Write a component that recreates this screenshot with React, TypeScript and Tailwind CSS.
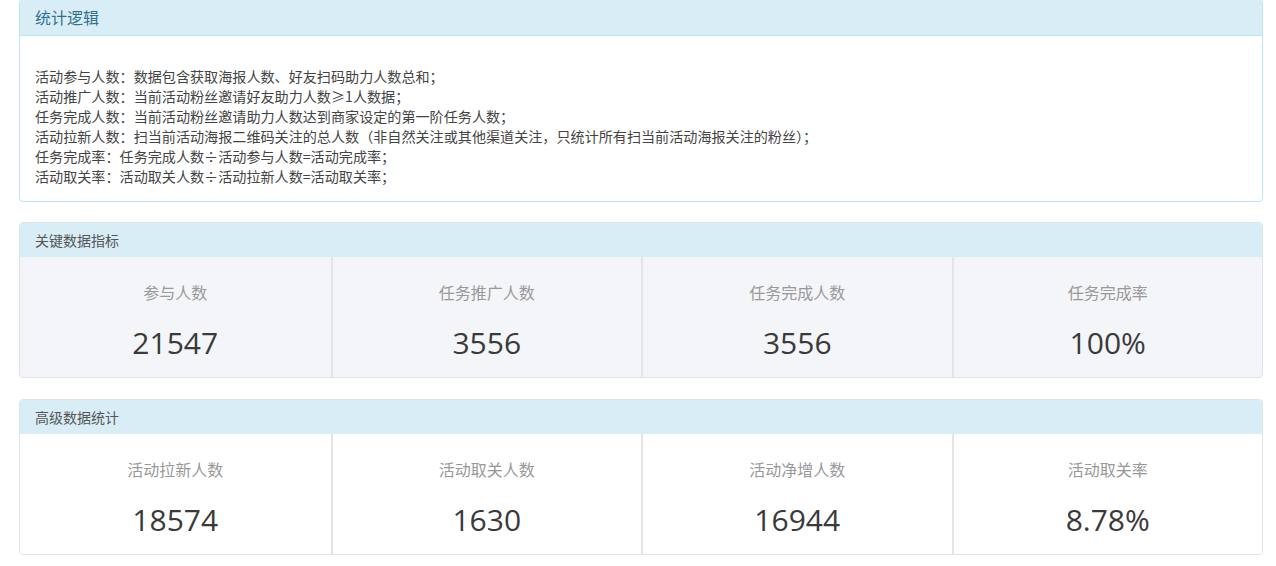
const logicLines = [
  "活动参与人数：数据包含获取海报人数、好友扫码助力人数总和；",
  "活动推广人数：当前活动粉丝邀请好友助力人数≥1人数据；",
  "任务完成人数：当前活动粉丝邀请助力人数达到商家设定的第一阶任务人数；",
  "活动拉新人数：扫当前活动海报二维码关注的总人数（非自然关注或其他渠道关注，只统计所有扫当前活动海报关注的粉丝）；",
  "任务完成率：任务完成人数÷活动参与人数=活动完成率；",
  "活动取关率：活动取关人数÷活动拉新人数=活动取关率；",
];

const keyStats = [
  { label: "参与人数", value: "21547" },
  { label: "任务推广人数", value: "3556" },
  { label: "任务完成人数", value: "3556" },
  { label: "任务完成率", value: "100%" },
];

const advStats = [
  { label: "活动拉新人数", value: "18574" },
  { label: "活动取关人数", value: "1630" },
  { label: "活动净增人数", value: "16944" },
  { label: "活动取关率", value: "8.78%" },
];

function StatPanel({
  title,
  stats,
  gray,
}: {
  title: string;
  stats: { label: string; value: string }[];
  gray?: boolean;
}) {
  return (
    <div className="rounded-[4px] border border-[#dfe3e6] overflow-hidden">
      <div className="h-[34px] bg-[#d9edf7] px-[15px] flex items-center text-[14px] text-[#555]">
        {title}
      </div>
      <div className="grid grid-cols-4">
        {stats.map((s, i) => (
          <div
            key={s.label}
            className={`h-[120px] flex flex-col items-center ${gray ? "bg-[#f4f5f8]" : "bg-white"} ${
              i > 0 ? "border-l-2 border-[#e3e5e8]" : ""
            }`}
          >
            <div className="mt-[25px] h-[22px] leading-[22px] text-[16px] text-[#999]">{s.label}</div>
            <div className="mt-[19px] h-[40px] leading-[40px] text-[30px] text-[#3a3a3a] font-['Open_Sans',sans-serif]">
              {s.value}
            </div>
          </div>
        ))}
      </div>
    </div>
  );
}

export default function App() {
  return (
    <div className="w-[1276px] h-[566px] bg-white pl-[19px] pr-[13px] font-['Noto_Sans','Noto_Sans_CJK_SC',sans-serif] overflow-hidden">
      <div className="-mt-px rounded-[4px] border border-[#bce8f1] overflow-hidden">
        <div className="h-[36px] bg-[#d9edf7] px-[15px] flex items-center text-[16px] text-[#31708f] border-b border-[#bce8f1]">
          统计逻辑
        </div>
        <div className="pt-[30px] pb-[15px] px-[15px] text-[14.1px] leading-[20px] text-[#444] font-['Noto_Sans_CJK_SC',sans-serif]">
          {logicLines.map((l) => (
            <div key={l}>{l}</div>
          ))}
        </div>
      </div>

      <div className="mt-[20px]">
        <StatPanel title="关键数据指标" stats={keyStats} gray />
      </div>
      <div className="mt-[21px]">
        <StatPanel title="高级数据统计" stats={advStats} />
      </div>
    </div>
  );
}
